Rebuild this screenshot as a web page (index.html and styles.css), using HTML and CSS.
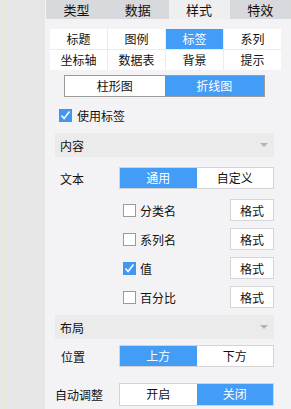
FILE: index.html
```html
<!DOCTYPE html>
<html lang="zh">

<head>
    <meta charset="UTF-8">
    <title>样式</title>
    <link rel="stylesheet" href="styles.css">
</head>

<body>
    <div class="side"></div>
    <div class="panel">
        <!-- 顶部标签 -->
        <div class="tabs">
            <span>类型</span>
            <span>数据</span>
            <span class="active">样式</span>
            <span>特效</span>
        </div>

        <div class="subtabs">
            <span>标题</span>
            <span>图例</span>
            <span class="active">标签</span>
            <span>系列</span>
            <span>坐标轴</span>
            <span>数据表</span>
            <span>背景</span>
            <span>提示</span>
        </div>

        <div class="switch chart-type">
            <span>柱形图</span>
            <span class="on">折线图</span>
        </div>

        <label class="check-row">
            <i class="box checked"></i>使用标签
        </label>

        <!-- 内容 -->
        <div class="section">内容<i class="arrow"></i></div>

        <div class="field">
            <span class="label">文本</span>
            <div class="switch">
                <span class="on">通用</span>
                <span>自定义</span>
            </div>
        </div>

        <div class="opt">
            <i class="box"></i><span class="name">分类名</span>
            <button class="fmt">格式</button>
        </div>
        <div class="opt">
            <i class="box"></i><span class="name">系列名</span>
            <button class="fmt">格式</button>
        </div>
        <div class="opt">
            <i class="box checked"></i><span class="name">值</span>
            <button class="fmt">格式</button>
        </div>
        <div class="opt">
            <i class="box"></i><span class="name">百分比</span>
            <button class="fmt">格式</button>
        </div>

        <!-- 布局 -->
        <div class="section layout">布局<i class="arrow"></i></div>

        <div class="field pos">
            <span class="label">位置</span>
            <div class="switch">
                <span class="on">上方</span>
                <span>下方</span>
            </div>
        </div>

        <div class="field auto">
            <span class="label">自动调整</span>
            <div class="switch">
                <span>开启</span>
                <span class="on">关闭</span>
            </div>
        </div>
    </div>
</body>

</html>
```

FILE: styles.css
```css
body {
    margin: 0;
    display: flex;
    height: 409px;
    overflow: hidden;
    font: 12px "Noto Sans CJK SC", "Liberation Sans", sans-serif;
    color: #111;
}

.side {
    width: 45px;
    flex: none;
    background: linear-gradient(to right, #e6e6e6 4px, #efe8d4 4px, #efe8d4 5px, #e6e6e6 5px);
}

.panel {
    flex: 1;
    display: flex;
    flex-direction: column;
    background: #f3f3f5;
}

.tabs {
    display: grid;
    grid-template-columns: repeat(4, 1fr);
    height: 19px;
    margin-left: 1px;
    background: #d8d9dc;
}

.tabs span {
    text-align: center;
    line-height: 19px;
    font-size: 13px;
}

.tabs span.active {
    background: #eeeff1;
}

.subtabs {
    display: grid;
    grid-template-columns: repeat(4, 1fr);
    grid-auto-rows: 20px;
    gap: 1px;
    margin: 10px 10px 0 5px;
    background: #ebebeb;
}

.subtabs span {
    background: #fff;
    text-align: center;
    line-height: 20px;
}

.subtabs span.active {
    background: #439cf6;
    color: #fff;
}

.switch {
    display: flex;
    flex: none;
    box-sizing: border-box;
    width: 155px;
    height: 22px;
    border: 1px solid #d4d4d6;
    background: #fff;
}

.switch span {
    flex: 1;
    text-align: center;
    line-height: 20px;
}

.switch span.on {
    background: #439cf6;
    color: #fff;
}

.chart-type {
    width: 201px;
    margin: 5px 0 0 19px;
    border-color: #9c9c9c;
}

.box {
    box-sizing: border-box;
    width: 13px;
    height: 13px;
    flex: none;
    border: 1px solid #9a9a9a;
    background: #fff;
}

.box.checked {
    border: none;
    background: #3f97f2 url("data:image/svg+xml;utf8,<svg xmlns='http://www.w3.org/2000/svg' width='13' height='13'><path d='M2.5 6.5l2.6 3 5.4-7' fill='none' stroke='white' stroke-width='1.6'/></svg>");
}

.check-row {
    display: flex;
    align-items: center;
    gap: 5px;
    height: 13px;
    margin-top: 12px;
    padding-left: 14px;
}

.section {
    display: flex;
    align-items: center;
    height: 24px;
    margin: 11px 17px 0 10px;
    padding: 0 6px 0 5px;
    background: #ebebeb;
}

.section.layout {
    margin-top: 7px;
}

.arrow {
    margin-left: auto;
    width: 0;
    height: 0;
    border-left: 4px solid transparent;
    border-right: 4px solid transparent;
    border-top: 4px solid #b3b3b3;
}

.field {
    display: flex;
    align-items: center;
    margin-top: 10px;
}

.field .label {
    width: 74px;
    flex: none;
    padding-left: 15px;
    box-sizing: border-box;
    white-space: nowrap;
}

.field.pos {
    margin-top: 6px;
}

.field.pos .label {
    padding-left: 16px;
}

.field.auto {
    margin-top: 16px;
}

.field.auto .label {
    padding-left: 10px;
}

.field.auto .switch {
    height: 23px;
}

.opt {
    display: flex;
    align-items: center;
    height: 22px;
    margin: 7px 17px 0 0;
    padding-left: 78px;
}

.field + .opt {
    margin-top: 10px;
}

.opt .name {
    margin-left: 4px;
}

.fmt {
    margin-left: auto;
    box-sizing: border-box;
    width: 44px;
    height: 22px;
    padding: 0;
    border: 1px solid #d6d6d8;
    background: #fff;
    font: 12px "Noto Sans CJK SC", "Liberation Sans", sans-serif;
    color: #111;
}
```
